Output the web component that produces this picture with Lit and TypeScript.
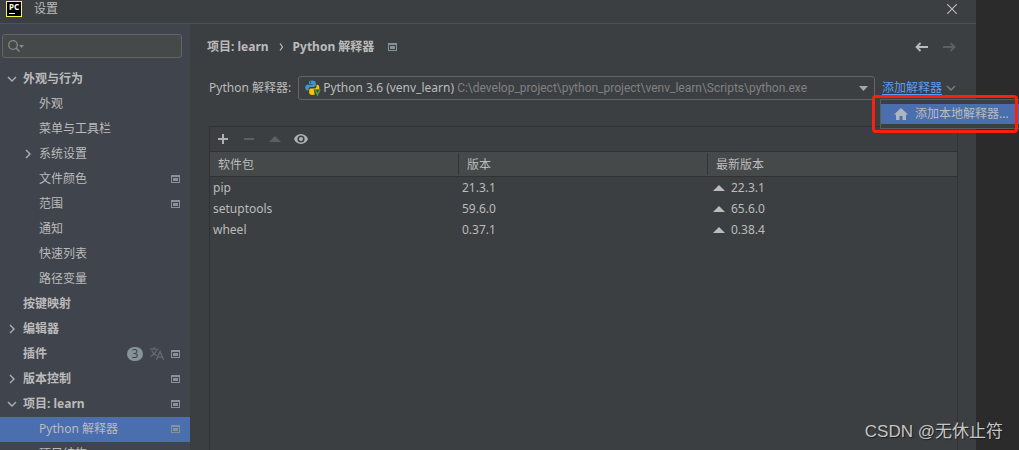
import { LitElement, html, css, svg, nothing } from "lit";
import { customElement, property, state } from "lit/decorators.js";
import { classMap } from "lit/directives/class-map.js";

interface TreeItem {
  label: string;
  level: 0 | 1;
  arrow?: "open" | "closed";
  scoped?: boolean;
  badge?: number;
  translated?: boolean;
}

interface PackageRow {
  name: string;
  version: string;
  latest: string;
}

const TREE: TreeItem[] = [
  { label: "外观与行为", level: 0, arrow: "open" },
  { label: "外观", level: 1 },
  { label: "菜单与工具栏", level: 1 },
  { label: "系统设置", level: 1, arrow: "closed" },
  { label: "文件颜色", level: 1, scoped: true },
  { label: "范围", level: 1, scoped: true },
  { label: "通知", level: 1 },
  { label: "快速列表", level: 1 },
  { label: "路径变量", level: 1 },
  { label: "按键映射", level: 0 },
  { label: "编辑器", level: 0, arrow: "closed" },
  { label: "插件", level: 0, badge: 3, translated: true, scoped: true },
  { label: "版本控制", level: 0, arrow: "closed", scoped: true },
  { label: "项目: learn", level: 0, arrow: "open", scoped: true },
  { label: "Python 解释器", level: 1, scoped: true },
  { label: "项目结构", level: 1, scoped: true },
];

const PACKAGES: PackageRow[] = [
  { name: "pip", version: "21.3.1", latest: "22.3.1" },
  { name: "setuptools", version: "59.6.0", latest: "65.6.0" },
  { name: "wheel", version: "0.37.1", latest: "0.38.4" },
];

const chevronDown = html`<svg width="10" height="10" viewBox="0 0 10 10" aria-hidden="true">
  <path d="M1 3l4 4 4-4" fill="none" stroke="currentColor" stroke-width="1.4" />
</svg>`;

const chevronRight = html`<svg width="10" height="10" viewBox="0 0 10 10" aria-hidden="true">
  <path d="M3 1l4 4-4 4" fill="none" stroke="currentColor" stroke-width="1.4" />
</svg>`;

const scopeIcon = html`<svg width="9" height="8" viewBox="0 0 9 8" aria-hidden="true" shape-rendering="crispEdges">
  <path d="M0 0h9v8H0zM1 2v5h7V2z" fill="#87939a" fill-rule="evenodd" />
  <path d="M2 3h5v3H2z" fill="#87939a" />
</svg>`;

const translateIcon = html`<svg width="14" height="13" viewBox="0 0 14 13" aria-hidden="true">
  <g fill="none" stroke="#646a72" stroke-width="1.3">
    <path d="M0 2.2h8.5M4.2 0v2.2M6.8 2.4C6 5.5 3.6 7.8.4 9.4M1.8 3.6C2.8 6 4.6 7.8 6.6 9" />
    <path d="M6.4 12.8L10 4.4l3.6 8.4M7.6 10.2h4.8" />
  </g>
</svg>`;

const upTriangle = html`<svg width="12" height="6" viewBox="0 0 12 6" aria-hidden="true">
  <path d="M6 0l6 6H0z" fill="currentColor" />
</svg>`;

const arrowPath = svg`<path d="M13 5H1.5M5.5 1l-4 4 4 4" fill="none" stroke="currentColor" stroke-width="1.8" />`;

@customElement("settings-tree")
export class SettingsTree extends LitElement {
  @property({ attribute: false }) items: TreeItem[] = [];
  @property() selected = "";

  static styles = css`
    :host {
      display: block;
    }
    .list {
      list-style: none;
      margin: 0;
      padding: 0;
    }
    .row {
      display: flex;
      align-items: center;
      width: 100%;
      height: 25px;
      padding: 0 10px 2px 7px;
      border: 0;
      background: none;
      color: #bbbbbb;
      font: inherit;
      text-align: left;
      white-space: nowrap;
    }
    .child {
      padding-left: 23px;
    }
    .top {
      font-weight: 700;
    }
    .current {
      background: #4b6eaf;
    }
    .arrow {
      display: flex;
      flex: none;
      width: 16px;
      color: #adb0b3;
    }
    .label {
      flex: 1;
    }
    .marks {
      display: flex;
      align-items: center;
      gap: 7px;
    }
    .badge {
      min-width: 16px;
      height: 14px;
      border-radius: 7px;
      background: #87939a;
      color: #3f434b;
      font-size: 12px;
      font-weight: 400;
      line-height: 14px;
      text-align: center;
    }
    svg {
      display: block;
    }
  `;

  private pick(label: string) {
    this.dispatchEvent(new CustomEvent("pick", { detail: label }));
  }

  render() {
    return html`<ul class="list">
      ${this.items.map(
        (item) => html`<li>
          <button
            class=${classMap({
              row: true,
              top: item.level === 0,
              child: item.level === 1,
              current: item.label === this.selected,
            })}
            @click=${() => this.pick(item.label)}
          >
            <span class="arrow">
              ${item.arrow === "open" ? chevronDown : item.arrow === "closed" ? chevronRight : nothing}
            </span>
            <span class="label">${item.label}</span>
            <span class="marks">
              ${item.badge ? html`<span class="badge">${item.badge}</span>` : nothing}
              ${item.translated ? translateIcon : nothing} ${item.scoped ? scopeIcon : nothing}
            </span>
          </button>
        </li>`
      )}
    </ul>`;
  }
}

@customElement("package-table")
export class PackageTable extends LitElement {
  @property({ attribute: false }) rows: PackageRow[] = [];

  static styles = css`
    :host {
      display: flex;
      flex-direction: column;
      border: 1px solid #323232;
      border-bottom: 0;
    }
    .toolbar {
      display: flex;
      align-items: center;
      gap: 10px;
      height: 24px;
      padding: 0 5px;
      border-bottom: 1px solid #323232;
    }
    .tool {
      display: grid;
      place-items: center;
      width: 16px;
      height: 16px;
      padding: 0;
      border: 0;
      background: none;
      color: #afb1b3;
    }
    .tool:disabled {
      color: #5e6060;
    }
    .grid {
      width: 100%;
      table-layout: fixed;
      border-collapse: separate;
      border-spacing: 0;
    }
    th {
      box-sizing: border-box;
      height: 25px;
      padding: 2px 8px 0;
      border-bottom: 1px solid #323232;
      background: linear-gradient(#323232, #323232) right / 1px 22px no-repeat #45494a;
      font-weight: 400;
      line-height: 16px;
      text-align: left;
    }
    th:last-child {
      background: #45494a;
    }
    td {
      height: 21px;
      padding: 0 3px;
      line-height: 16px;
    }
    .latest {
      display: flex;
      align-items: center;
      gap: 6px;
      padding-left: 2px;
      color: #bbbbbb;
    }
    svg {
      display: block;
    }
  `;

  render() {
    return html`
      <div class="toolbar">
        <button class="tool" aria-label="安装">
          <svg width="10" height="10" viewBox="0 0 10 10"><path d="M5 0v10M0 5h10" stroke="currentColor" stroke-width="2" /></svg>
        </button>
        <button class="tool" aria-label="卸载" disabled>
          <svg width="10" height="2" viewBox="0 0 10 2"><path d="M0 1h10" stroke="currentColor" stroke-width="2" /></svg>
        </button>
        <button class="tool" aria-label="升级" disabled>${upTriangle}</button>
        <button class="tool" aria-label="显示早期版本">
          <svg width="14" height="10" viewBox="0 0 14 10">
            <path
              d="M7 0C3.600 0 1 2.200 0 5c1 2.800 3.600 5 7 5s6-2.200 7-5C13 2.200 10.400 0 7 0zm0 8.600A3.600 3.600 0 1 1 7 1.400a3.600 3.600 0 0 1 0 7.200z"
              fill="currentColor"
              fill-rule="evenodd"
            />
            <circle cx="7" cy="5" r="2" fill="currentColor" />
          </svg>
        </button>
      </div>
      <table class="grid">
        <thead>
          <tr>
            <th scope="col">软件包</th>
            <th scope="col">版本</th>
            <th scope="col">最新版本</th>
          </tr>
        </thead>
        <tbody>
          ${this.rows.map(
            (row) => html`<tr>
              <td>${row.name}</td>
              <td>${row.version}</td>
              <td><span class="latest">${upTriangle}${row.latest}</span></td>
            </tr>`
          )}
        </tbody>
      </table>
    `;
  }
}

@customElement("app-root")
export class AppRoot extends LitElement {
  @state() private page = "Python 解释器";

  static styles = css`
    :host {
      display: flex;
      position: relative;
      height: 100vh;
      overflow: hidden;
      background: #2b2b2b;
      color: #bbbbbb;
      font-family: "Noto Sans", "Noto Sans CJK SC", sans-serif;
      font-size: 12px;
      line-height: 16px;
    }
    * {
      box-sizing: border-box;
    }
    svg {
      display: block;
      flex: none;
    }
    button {
      padding: 0;
      border: 0;
      background: none;
      color: inherit;
      font: inherit;
    }
    .dialog {
      display: flex;
      flex: 1;
      flex-direction: column;
      min-width: 0;
      margin-right: 43px;
      background: #3c3f41;
    }
    .titlebar {
      display: flex;
      flex: none;
      align-items: center;
      gap: 12px;
      height: 24px;
      padding: 0 19px 5px 6px;
      border-bottom: 1px solid #4f5254;
    }
    .logo {
      width: 16px;
      height: 16px;
      padding: 0 2px;
      border: 1px solid #fcf84a;
      background: #000000;
      color: #ffffff;
      font-size: 8px;
      font-weight: 700;
      line-height: 9px;
    }
    .logo::after {
      content: "";
      display: block;
      width: 6px;
      height: 1px;
      margin-top: 2px;
      background: #ffffff;
    }
    .title {
      flex: 1;
    }
    .body {
      display: flex;
      flex: 1;
      min-height: 0;
    }
    .sidebar {
      flex: none;
      width: 190px;
      overflow: hidden;
      background: #40444d;
    }
    .search {
      display: flex;
      align-items: center;
      gap: 4px;
      height: 24px;
      margin: 10px 8px 9px 2px;
      padding: 0 5px;
      border: 1px solid #646464;
      border-radius: 3px;
      background: #45494a;
    }
    .search input {
      flex: 1;
      min-width: 0;
      padding: 0;
      border: 0;
      outline: 0;
      background: none;
      color: inherit;
      font: inherit;
    }
    .main {
      display: flex;
      flex: 1;
      flex-direction: column;
      min-width: 0;
      padding: 15px 18px 0 17px;
    }
    .crumbs {
      display: flex;
      align-items: center;
      height: 16px;
      gap: 8px;
      font-weight: 700;
    }
    .crumbs svg.here {
      margin-left: 6px;
    }
    .nav {
      display: flex;
      gap: 13px;
      margin-left: auto;
      padding-right: 2px;
    }
    .nav button {
      color: #bbbbbb;
    }
    .nav button:disabled {
      color: #5e6060;
    }
    .forward svg {
      transform: scaleX(-1);
    }
    .chooser {
      display: flex;
      align-items: center;
      gap: 7px;
      margin: 21px 0 26px 2px;
      white-space: nowrap;
    }
    .combo {
      display: flex;
      flex: 1;
      align-items: center;
      gap: 2px;
      height: 24px;
      min-width: 0;
      padding: 0 6px;
      border: 1px solid #646464;
      border-radius: 3px;
    }
    .combo select {
      appearance: none;
      padding: 0 1px 0 0;
      border: 0;
      background: none;
      color: inherit;
      font: inherit;
    }
    .path {
      flex: 1;
      overflow: hidden;
      color: #7f8182;
      font-family: Roboto, sans-serif;
    }
    .add {
      display: flex;
      align-items: center;
      gap: 4px;
      padding-right: 2px;
    }
    .add a {
      color: #589df6;
      text-decoration: underline;
      text-underline-offset: 2px;
    }
    .add svg {
      color: #7a7e80;
    }
    package-table {
      flex: 1;
      margin-left: 2px;
    }
    .popup {
      position: absolute;
      top: 99px;
      right: 0;
      width: 139px;
      padding: 4px 0;
      border: 1px solid #5b5d5f;
      border-right: 0;
      background: #3c3f41;
    }
    .popup button {
      display: flex;
      align-items: center;
      gap: 7px;
      width: 100%;
      height: 20px;
      padding-left: 13px;
      background: #4b6eaf;
      white-space: nowrap;
    }
    .highlight {
      position: absolute;
      top: 95px;
      right: 1px;
      width: 146px;
      height: 38px;
      border: 3px solid #ff1f10;
      border-radius: 4px;
      pointer-events: none;
    }
    .watermark {
      position: absolute;
      right: 16px;
      bottom: 6px;
      color: #c4c5c6;
      font-family: "Liberation Sans", "Noto Sans CJK SC", sans-serif;
      font-size: 17px;
      line-height: 24px;
      text-shadow: 1px 1px 1px #1d1d1d;
    }
  `;

  render() {
    return html`
      <div class="dialog">
        <header class="titlebar">
          <span class="logo">PC</span>
          <span class="title">设置</span>
          <button aria-label="关闭">
            <svg width="10" height="10" viewBox="0 0 10 10">
              <path d="M0 0l10 10M10 0L0 10" stroke="#bbbbbb" stroke-width="1.1" />
            </svg>
          </button>
        </header>
        <div class="body">
          <aside class="sidebar">
            <label class="search">
              <svg width="17" height="12" viewBox="0 0 17 12" aria-hidden="true">
                <circle cx="5" cy="5" r="4.300" fill="none" stroke="#84898b" stroke-width="1.3" />
                <path d="M8 8l3.500 3.500" stroke="#84898b" stroke-width="1.500" />
                <path d="M11 5h5l-2.500 3z" fill="#84898b" />
              </svg>
              <input type="text" aria-label="搜索" />
            </label>
            <settings-tree
              .items=${TREE}
              .selected=${this.page}
              @pick=${(e: CustomEvent<string>) => (this.page = e.detail)}
            ></settings-tree>
          </aside>
          <main class="main">
            <div class="crumbs">
              <span>项目: learn</span>
              <svg width="8" height="8" viewBox="0 0 8 8" aria-hidden="true">
                <path d="M3 .500L5.500 4 3 7.500" fill="none" stroke="#bbbbbb" stroke-width="1.200" />
              </svg>
              <span>Python 解释器</span>
              <svg class="here" width="9" height="8" viewBox="0 0 9 8" aria-hidden="true" shape-rendering="crispEdges">
                <path d="M0 0h9v8H0zM1 2v5h7V2z" fill="#87939a" fill-rule="evenodd" />
                <path d="M2 3h5v3H2z" fill="#87939a" />
              </svg>
              <div class="nav">
                <button aria-label="后退"><svg width="14" height="10" viewBox="0 0 14 10">${arrowPath}</svg></button>
                <button class="forward" aria-label="前进" disabled>
                  <svg width="14" height="10" viewBox="0 0 14 10">${arrowPath}</svg>
                </button>
              </div>
            </div>
            <div class="chooser">
              <label for="interpreter">Python 解释器:</label>
              <div class="combo">
                <svg width="16" height="16" viewBox="0 0 16 16" aria-hidden="true">
                  <path
                    d="M7 .500c-2.600 0-3 .900-3 2V4h3.500v.800H2.400C1 4.800.300 6 .300 7.600s.700 3 2 3H3.500V9c0-1.200 1-2 2-2H9c1 0 1.700-.800 1.700-1.700V2.500C10.700 1.200 9.500.500 7 .500z"
                    fill="#3f97cc"
                  />
                  <circle cx="5.500" cy="2.300" r=".700" fill="#3c3f41" />
                  <path
                    d="M11.500 4.800V6.500c0 1.200-.900 1.900-1.900 1.900H6c-1 0-1.800.700-1.800 1.700V13c0 1.300 1.300 1.900 3.300 1.900 1 0 1.800-.100 2.300-.400L8.700 9.500h5.600V7.600c0-1.700-.700-2.800-1.900-2.800z"
                    fill="#f7c60a"
                  />
                  <path d="M10 9.500l2.500 5.200L15 9.500" fill="none" stroke="#4f9e45" stroke-width="1.600" />
                </svg>
                <select id="interpreter">
                  <option>Python 3.6 (venv_learn)</option>
                </select>
                <span class="path">C:\\develop_project\\python_project\\venv_learn\\Scripts\\python.exe</span>
                <svg width="9" height="5" viewBox="0 0 9 5" aria-hidden="true">
                  <path d="M0 0h9L4.500 5z" fill="#a5a8a9" />
                </svg>
              </div>
              <div class="add">
                <a href="#add">添加解释器</a>
                ${chevronDown}
              </div>
            </div>
            <package-table .rows=${PACKAGES}></package-table>
          </main>
        </div>
      </div>
      <div class="popup" role="menu">
        <button role="menuitem">
          <svg width="14" height="12" viewBox="0 0 14 12" aria-hidden="true">
            <path d="M7 0l7 6.500h-2V12H8.500V8h-3v4H2V6.500H0z" fill="#afb5bd" />
          </svg>
          添加本地解释器...
        </button>
      </div>
      <div class="highlight"></div>
      <div class="watermark">CSDN @无休止符</div>
    `;
  }
}
